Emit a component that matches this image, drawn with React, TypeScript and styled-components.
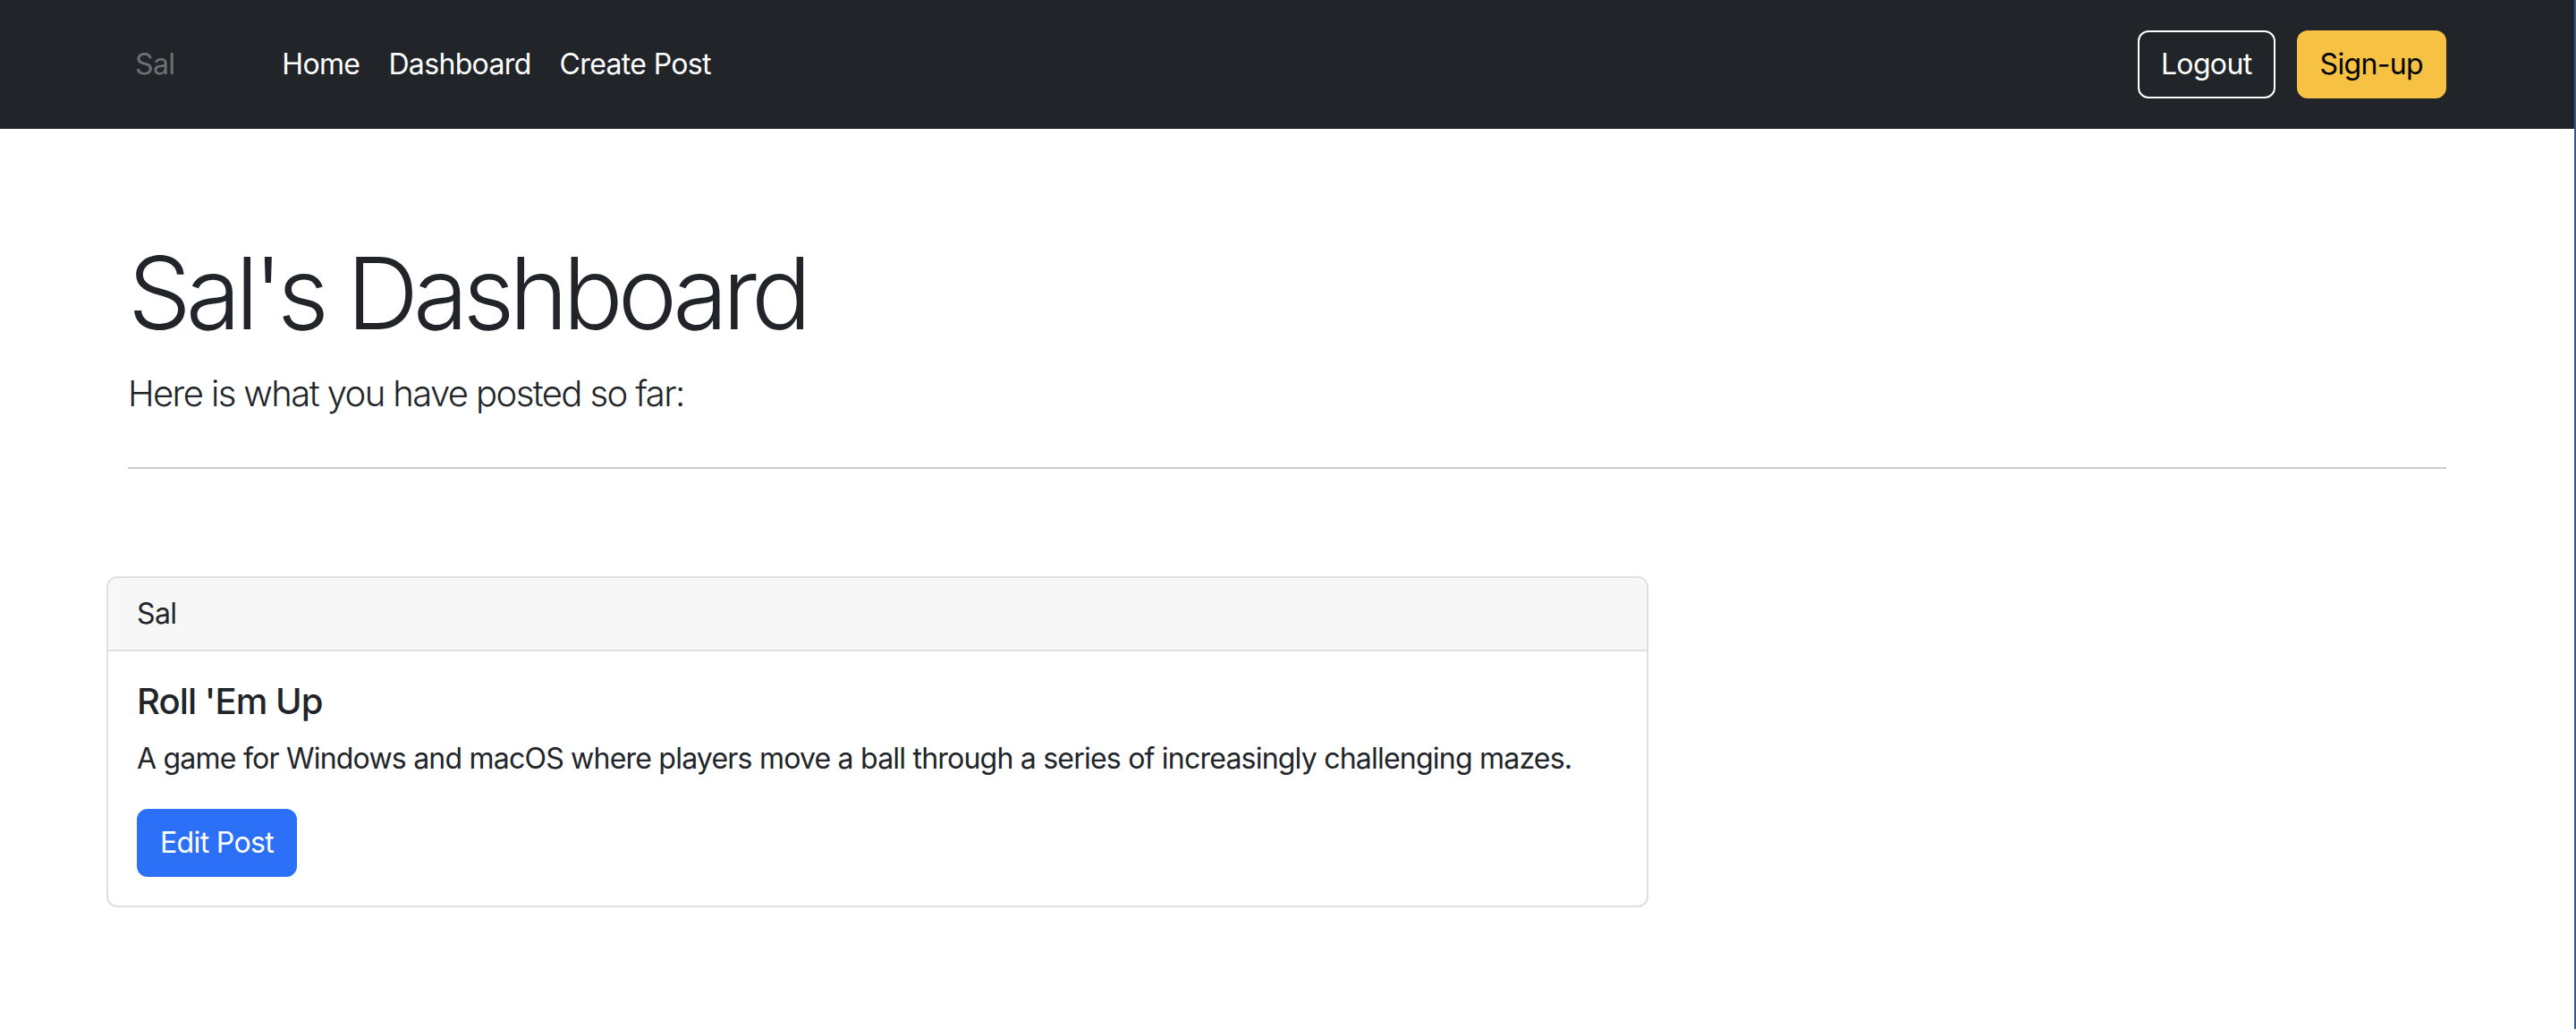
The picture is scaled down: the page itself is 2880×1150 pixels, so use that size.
import React from "react";
import styled, { createGlobalStyle } from "styled-components";

const Global = createGlobalStyle`
  html, body { margin: 0; padding: 0; background: #ffffff; }
  body {
    font-family: Inter, "Noto Sans", "Liberation Sans", sans-serif;
    color: #212529;
    letter-spacing: -0.65px;
    -webkit-font-smoothing: antialiased;
  }
  * { box-sizing: border-box; }
`;

const Page = styled.div`
  min-height: 1150px;
  border-right: 2px solid #2b5d8f;
`;

const NavBar = styled.nav`
  height: 144px;
  background: #212529;
  display: flex;
  align-items: center;
`;

const NavInner = styled.div`
  width: 100%;
  max-width: 2640px;
  margin: 0 auto;
  padding: 0 24px;
  display: flex;
  align-items: center;
`;

const Brand = styled.a`
  font-size: 32px;
  line-height: 48px;
  color: #6c7177;
  padding: 0 8px;
  text-decoration: none;
  margin-right: 96px;
`;

const NavLinks = styled.ul`
  list-style: none;
  margin: 0;
  padding: 0;
  display: flex;
  align-items: center;
  flex: 1;
`;

const NavLink = styled.li`
  font-size: 32px;
  line-height: 48px;
  color: #ffffff;
  padding: 0 16px;
`;

const NavActions = styled.div`
  display: flex;
  align-items: center;
  gap: 24px;
`;

const Button = styled.button<{ $variant: "outline" | "warning" | "primary" }>`
  font-family: inherit;
  letter-spacing: inherit;
  font-size: 32px;
  line-height: 48px;
  padding: 12px 24px;
  border-radius: 12px;
  border: 2px solid
    ${(p) =>
      p.$variant === "outline" ? "#ffffff" : p.$variant === "warning" ? "#f7c244" : "#2b70f6"};
  background: ${(p) =>
    p.$variant === "outline" ? "transparent" : p.$variant === "warning" ? "#f7c244" : "#2b70f6"};
  color: ${(p) => (p.$variant === "warning" ? "#000000" : "#ffffff")};
  cursor: pointer;
`;

const Main = styled.main`
  max-width: 2640px;
  margin: 0 auto;
  padding: 0 24px;
`;

const Hero = styled.header`
  padding-top: 116px;
`;

const Title = styled.h1`
  margin: 0 0 16px;
  font-size: 112px;
  font-weight: 300;
  line-height: 1.2;
  letter-spacing: -6px;
`;

const Lead = styled.p`
  margin: 0;
  font-size: 40px;
  font-weight: 300;
  line-height: 1.5;
  letter-spacing: -1.6px;
`;

const Divider = styled.hr`
  margin: 52px 0 0;
  border: 0;
  border-top: 2px solid #cccccc;
`;

const PostRow = styled.section`
  margin: 120px -24px 0;
  display: flex;
`;

const Card = styled.article`
  width: 1724px;
  border: 2px solid #dfdfdf;
  border-radius: 12px;
  overflow: hidden;
  background: #ffffff;
`;

const CardHeader = styled.div`
  background: #f7f7f7;
  border-bottom: 2px solid #dfdfdf;
  padding: 16px 32px;
  font-size: 32px;
  line-height: 48px;
`;

const CardBody = styled.div`
  padding: 32px;
`;

const CardTitle = styled.h5`
  margin: 0 0 16px;
  font-size: 40px;
  font-weight: 500;
  line-height: 1.2;
  letter-spacing: -0.9px;
`;

const CardText = styled.p`
  margin: 0 0 32px;
  font-size: 32px;
  line-height: 48px;
  letter-spacing: -0.78px;
  white-space: nowrap;
`;

export default function App() {
  return (
    <>
      <Global />
      <Page>
        <NavBar>
          <NavInner>
            <Brand href="#">Sal</Brand>
            <NavLinks>
              <NavLink>Home</NavLink>
              <NavLink>Dashboard</NavLink>
              <NavLink>Create Post</NavLink>
            </NavLinks>
            <NavActions>
              <Button $variant="outline">Logout</Button>
              <Button $variant="warning">Sign-up</Button>
            </NavActions>
          </NavInner>
        </NavBar>
        <Main>
          <Hero>
            <Title>Sal's Dashboard</Title>
            <Lead>Here is what you have posted so far:</Lead>
            <Divider />
          </Hero>
          <PostRow>
            <Card>
              <CardHeader>Sal</CardHeader>
              <CardBody>
                <CardTitle>Roll 'Em Up</CardTitle>
                <CardText>
                  A game for Windows and macOS where players move a ball through a series of
                  increasingly challenging mazes.
                </CardText>
                <Button $variant="primary">Edit Post</Button>
              </CardBody>
            </Card>
          </PostRow>
        </Main>
      </Page>
    </>
  );
}
